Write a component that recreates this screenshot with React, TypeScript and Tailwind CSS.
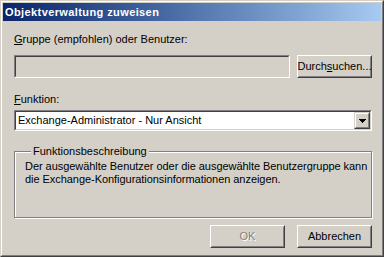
import type { ReactNode } from "react"

function RaisedButton({ children, disabled = false }: { children: ReactNode; disabled?: boolean }) {
  return (
    <div className="h-[23px] w-[75px] border border-t-white border-l-white border-r-[#404040] border-b-[#404040]">
      <div
        className={
          "flex h-full items-center justify-center whitespace-nowrap border border-t-[#d4d0c8] border-l-[#d4d0c8] border-r-[#808080] border-b-[#808080] " +
          (disabled ? "text-[#808080] [text-shadow:1px_1px_0_#fff]" : "text-black")
        }
      >
        {children}
      </div>
    </div>
  )
}

function Sunken({ children, className = "" }: { children?: ReactNode; className?: string }) {
  return (
    <div className={"border border-t-[#808080] border-l-[#808080] border-r-white border-b-white " + className}>
      <div className="flex h-full border border-t-[#404040] border-l-[#404040] border-r-[#d4d0c8] border-b-[#d4d0c8]">
        {children}
      </div>
    </div>
  )
}

export default function App() {
  return (
    <div className="h-[257px] w-[384px] border border-t-[#d4d0c8] border-l-[#d4d0c8] border-r-[#404040] border-b-[#404040] bg-[#d4d0c8] font-['Liberation_Sans',Arial,sans-serif] text-[11px] leading-[13px] text-black">
      <div className="flex h-full flex-col border border-t-white border-l-white border-r-[#808080] border-b-[#808080] p-px">
        {/* Caption */}
        <div className="flex h-[18px] shrink-0 items-center bg-linear-to-r from-[#0a246a] to-[#a6caf0] pl-[2px] font-bold tracking-[0.4px] text-white">
          Objektverwaltung zuweisen
        </div>

        <div className="flex flex-col pl-[11px] pr-[9px]">
          <div className="mt-[12px]">
            <span className="underline">G</span>ruppe (empfohlen) oder Benutzer:
          </div>

          <div className="mt-[9px] flex gap-[7px]">
            <Sunken className="h-[23px] flex-1 bg-[#d4d0c8]" />
            <RaisedButton>
              Durch<span className="underline">s</span>uchen...
            </RaisedButton>
          </div>

          <div className="mt-[15px]">
            <span className="underline">F</span>unktion:
          </div>

          <Sunken className="mt-[4px] h-[21px] bg-white">
            <div className="flex flex-1 items-center pl-[2px] whitespace-nowrap">Exchange-Administrator - Nur Ansicht</div>
            <div className="h-full w-[16px] border border-t-[#d4d0c8] border-l-[#d4d0c8] border-r-[#404040] border-b-[#404040] bg-[#d4d0c8]">
              <div className="flex h-full items-center justify-center border border-t-white border-l-white border-r-[#808080] border-b-[#808080]">
                <svg width="7" height="4" viewBox="0 0 7 4" shapeRendering="crispEdges">
                  <rect x="0" y="0" width="7" height="1" fill="#000" />
                  <rect x="1" y="1" width="5" height="1" fill="#000" />
                  <rect x="2" y="2" width="3" height="1" fill="#000" />
                  <rect x="3" y="3" width="1" height="1" fill="#000" />
                </svg>
              </div>
            </div>
          </Sunken>

          <fieldset className="mt-[14px] h-[73px] border border-[#808080] pl-[10px] pt-[2px] shadow-[1px_1px_0_#fff,inset_1px_1px_0_#fff]">
            <legend className="ml-[6px] bg-[#d4d0c8] px-[2px] leading-[13px]">Funktionsbeschreibung</legend>
            <div className="whitespace-nowrap tracking-[-0.05px]">
              Der ausgewählte Benutzer oder die ausgewählte Benutzergruppe kann
              <br />
              die Exchange-Konfigurationsinformationen anzeigen.
            </div>
          </fieldset>

          <div className="mt-[7px] flex justify-end gap-[12px]">
            <RaisedButton disabled>OK</RaisedButton>
            <RaisedButton>Abbrechen</RaisedButton>
          </div>
        </div>
      </div>
    </div>
  )
}
